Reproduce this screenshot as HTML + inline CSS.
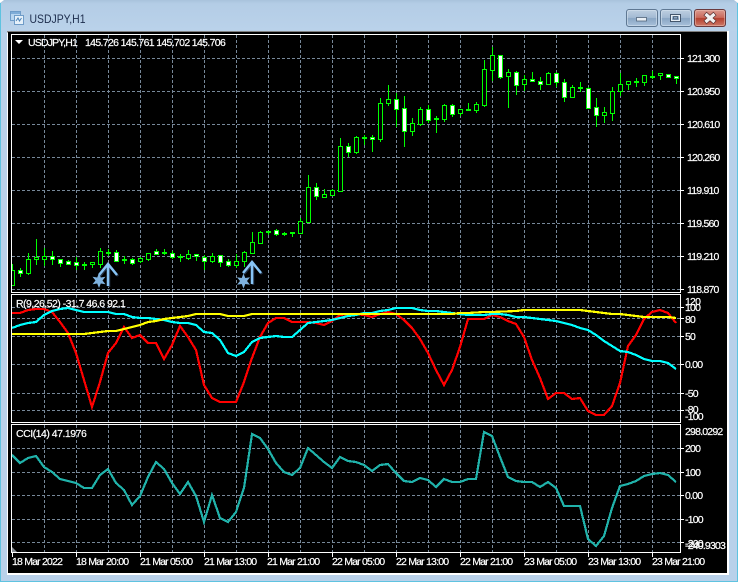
<!DOCTYPE html>
<html>
<head>
<meta charset="utf-8">
<title>USDJPY,H1</title>
<style>
html,body{margin:0;padding:0;background:#b9d1ea;width:738px;height:582px;overflow:hidden}
svg{display:block;position:absolute;left:0;top:0}
text{font-family:"Liberation Sans",sans-serif;font-size:10.500px;fill:#fff;stroke:#fff;stroke-width:.2px;letter-spacing:-.8px}
</style>
</head>
<body>
<svg width="738" height="582" viewBox="0 0 738 582" xmlns="http://www.w3.org/2000/svg">
<defs>
<linearGradient id="tb" x1="0" y1="0" x2="0" y2="1"><stop offset="0" stop-color="#a9c3dc"/><stop offset=".12" stop-color="#b4cde6"/><stop offset="1" stop-color="#bad2ea"/></linearGradient>
<linearGradient id="btn" x1="0" y1="0" x2="0" y2="1"><stop offset="0" stop-color="#bfd0e2"/><stop offset=".48" stop-color="#a3bad3"/><stop offset=".52" stop-color="#8aa6c4"/><stop offset="1" stop-color="#a9c2dc"/></linearGradient>
<linearGradient id="cls" x1="0" y1="0" x2="0" y2="1"><stop offset="0" stop-color="#dd9d92"/><stop offset=".48" stop-color="#c9685b"/><stop offset=".52" stop-color="#b4402f"/><stop offset="1" stop-color="#cf7d6c"/></linearGradient>
<clipPath id="p1"><rect x="12" y="35" width="668" height="257"/></clipPath>
<clipPath id="p2"><rect x="12" y="295" width="668" height="127"/></clipPath>
<clipPath id="p3"><rect x="12" y="425" width="668" height="127"/></clipPath>
</defs>

<!-- window frame -->
<rect width="738" height="582" fill="#b9d1ea"/>
<rect width="738" height="31" fill="url(#tb)"/>
<path d="M0 3V0h4zM738 3V0h-4z" fill="#fff"/>
<path d="M.5 3V581.5H737.5V3" fill="none" stroke="#5fc3e0" stroke-width="1"/>
<rect x="7" y="31" width="722" height="544" fill="#fff"/>
<rect x="7" y="31" width="720" height="1.5" fill="#7f7f7f"/>
<rect x="8" y="32" width="719" height="541" fill="#000"/>

<!-- title -->
<rect x="10.500" y="11.500" width="10" height="9" fill="#b9d6f0" stroke="#6f9cc8"/>
<rect x="14.500" y="15.500" width="9" height="9" fill="#e6f1fa" stroke="#6f9cc8"/>
<path d="M16 21l2-3 1.500 3 2-3" fill="none" stroke="#4d84b8"/>
<rect x="11" y="12" width="9" height="2" fill="#7fadd8"/>
<text x="29.500" y="23" style="font-size:12px;fill:#1c2c4c;stroke:none;letter-spacing:0" textLength="56" lengthAdjust="spacingAndGlyphs">USDJPY,H1</text>

<!-- buttons -->
<rect x="626.500" y="9.500" width="31" height="17" rx="2.500" fill="url(#btn)" stroke="#5f7893"/>
<rect x="627.500" y="10.500" width="29" height="15" rx="2" fill="none" stroke="#d5e2ee" stroke-opacity=".6"/>
<rect x="636.500" y="17.500" width="10" height="3.500" fill="#e9eff5" stroke="#50647a" stroke-width=".8"/>
<rect x="660.500" y="9.500" width="31" height="17" rx="2.500" fill="url(#btn)" stroke="#5f7893"/>
<rect x="661.500" y="10.500" width="29" height="15" rx="2" fill="none" stroke="#d5e2ee" stroke-opacity=".6"/>
<rect x="670.500" y="14.500" width="10" height="7" fill="none" stroke="#44566c" stroke-width="1"/>
<rect x="671.500" y="15.500" width="8" height="5" fill="none" stroke="#e9eff5" stroke-width="1"/>
<rect x="673.500" y="16.500" width="4" height="2.500" fill="#8aa6c4" stroke="#44566c" stroke-width=".8"/>
<rect x="694.500" y="9.500" width="31" height="17" rx="2.500" fill="url(#cls)" stroke="#6a3a3e"/>
<rect x="695.500" y="10.500" width="29" height="15" rx="2" fill="none" stroke="#eec3b8" stroke-opacity=".5"/>
<path d="M705 13.500l10 9M715 13.500l-10 9" stroke="#5a3030" stroke-width="4.600"/>
<path d="M705.500 14l9 8M714.500 14l-9 8" stroke="#f2f2f2" stroke-width="3.200"/>

<!-- grid -->
<g fill="none" stroke="#778899" stroke-width="1" stroke-dasharray="3 2" shape-rendering="crispEdges">
<path d="M44.500 35V552M76.500 35V552M108.500 35V552M140.500 35V552M172.500 35V552M204.500 35V552M236.500 35V552M268.500 35V552M300.500 35V552M332.500 35V552M364.500 35V552M396.500 35V552M428.500 35V552M460.500 35V552M492.500 35V552M524.500 35V552M556.500 35V552M588.500 35V552M620.500 35V552M652.500 35V552"/>
<path d="M12 58.500H680M12 91.500H680M12 124.500H680M12 157.500H680M12 190.500H680M12 223.500H680M12 256.500H680M12 289.500H680"/>
<path d="M12 307.500H680M12 318.500H680M12 336.500H680M12 364.500H680M12 393.500H680M12 410.500H680"/>
<path d="M12 448.500H680M12 472.500H680M12 495.500H680M12 519.500H680M12 542.500H680"/>
</g>

<!-- candles -->
<g clip-path="url(#p1)" shape-rendering="crispEdges" stroke="#00ff00" stroke-width="1">
<path fill="none" d="M12.500 264V285M20.500 268V277M28.500 253V275M36.500 239V265M44.500 248V266M52.500 251V265M60.500 259V267M68.500 260V265M76.500 257V270M84.500 262V270M92.500 262V268M100.500 248V268M108.500 249V256M116.500 250V262M124.500 256V264M132.500 258V265M140.500 257V263M148.500 253V261M156.500 249V255M164.500 249V255M172.500 251V259M180.500 254V262M188.500 250V260M196.500 254V261M204.500 255V270M212.500 253V263M220.500 255V267M228.500 259V267M236.500 254V268M244.500 251V267M252.500 232V253M260.500 231V243M268.500 231V235M276.500 229V236M284.500 232V236M292.500 232V237M300.500 218V233M308.500 175V223M316.500 183V200M324.500 189V197M332.500 189V195M340.500 138V191M348.500 143V157M356.500 136V154M364.500 135V145M372.500 135V152M380.500 98V142M388.500 85V106M396.500 93V127M404.500 96V147M412.500 118V136M420.500 107V126M428.500 105V123M436.500 116V133M444.500 104V122M452.500 104V117M460.500 109V116M468.500 103V111M476.500 102V113M484.500 60V107M492.500 47V81M500.500 55V79M508.500 69V108M516.500 71V95M524.500 75V91M532.500 72V82M540.500 77V90M548.500 72V85M556.500 72V87M564.500 79V102M572.500 85V98M580.500 82V92M588.500 87V109M596.500 98V127M604.500 107V123M612.500 87V121M620.500 73V96M628.500 81V90M636.500 78V87M644.500 75V86M652.500 71V79M660.500 73V80M668.500 74V78M676.500 76V84"/>
<path fill="#000" d="M10.500 270.500h4v15h-4zM26.500 259.500h4v14h-4zM34.500 257.500h4v2h-4zM42.500 256.500h4v3h-4zM90.500 262.500h4v2h-4zM98.500 251.500h4v13h-4zM138.500 258.500h4v3h-4zM146.500 253.500h4v6h-4zM186.500 254.500h4v4h-4zM210.500 256.500h4v5h-4zM234.500 261.500h4v4h-4zM242.500 252.500h4v9h-4zM250.500 242.500h4v11h-4zM258.500 232.500h4v11h-4zM298.500 221.500h4v12h-4zM306.500 187.500h4v35h-4zM322.500 194.500h4v3h-4zM330.500 190.500h4v5h-4zM338.500 146.500h4v45h-4zM354.500 137.500h4v15h-4zM378.500 103.500h4v36h-4zM386.500 99.500h4v4h-4zM410.500 123.500h4v8h-4zM418.500 109.500h4v15h-4zM442.500 105.500h4v14h-4zM458.500 109.500h4v4h-4zM474.500 104.500h4v6h-4zM482.500 69.500h4v36h-4zM490.500 55.500h4v15h-4zM506.500 72.500h4v4h-4zM522.500 79.500h4v5h-4zM546.500 73.500h4v11h-4zM570.500 87.500h4v10h-4zM602.500 112.500h4v3h-4zM610.500 91.500h4v22h-4zM618.500 84.500h4v7h-4zM626.500 81.500h4v3h-4zM642.500 75.500h4v7h-4zM658.500 73.500h4v2h-4z"/>
<path fill="#fff" d="M18.500 270.500h4v3h-4zM50.500 256.500h4v3h-4zM58.500 259.500h4v4h-4zM66.500 261.500h4v3h-4zM74.500 262.500h4v3h-4zM114.500 252.500h4v9h-4zM130.500 259.500h4v4h-4zM154.500 251.500h4v3h-4zM170.500 253.500h4v4h-4zM194.500 254.500h4v2h-4zM202.500 257.500h4v4h-4zM218.500 255.500h4v7h-4zM226.500 261.500h4v4h-4zM274.500 230.500h4v4h-4zM314.500 187.500h4v9h-4zM346.500 146.500h4v6h-4zM370.500 137.500h4v2h-4zM394.500 99.500h4v10h-4zM402.500 108.500h4v23h-4zM426.500 109.500h4v11h-4zM450.500 105.500h4v9h-4zM498.500 55.500h4v22h-4zM514.500 72.500h4v13h-4zM530.500 79.500h4v2h-4zM538.500 81.500h4v3h-4zM554.500 73.500h4v9h-4zM562.500 82.500h4v15h-4zM586.500 88.500h4v20h-4zM594.500 107.500h4v8h-4zM666.500 74.500h4v3h-4zM674.500 76.500h4v2h-4z"/>
<path fill="#00ff00" d="M82.500 264.500h4v1h-4zM106.500 252.500h4v1h-4zM122.500 259.500h4v1h-4zM162.500 252.500h4v1h-4zM178.500 256.500h4v1h-4zM266.500 231.500h4v1h-4zM282.500 233.500h4v1h-4zM290.500 232.500h4v1h-4zM362.500 137.500h4v1h-4zM434.500 118.500h4v1h-4zM466.500 109.500h4v1h-4zM578.500 87.500h4v1h-4zM634.500 81.500h4v1h-4zM650.500 76.500h4v1h-4z"/>
</g>

<!-- arrows + stars -->
<g fill="none">
<path d="M100 276L109 265L118 276M109 265V287" stroke="#25354a" stroke-width="2.500"/>
<path d="M99 275L108 264L117 275M108 264V286" stroke="#87c4f5" stroke-width="2.500"/>
<path d="M244 274L253 263L262 274M253 263V285" stroke="#25354a" stroke-width="2.500"/>
<path d="M243 273L252 262L261 273M252 262V284" stroke="#87c4f5" stroke-width="2.500"/>
</g>
<polygon transform="translate(99 280.500)" points="0,-7.500 1.800,-3 6.500,-3.750 3.500,0 6.500,3.750 1.800,3 0,7.500 -1.800,3 -6.500,3.750 -3.500,0 -6.500,-3.750 -1.800,-3" fill="#7fb2de"/>
<polygon transform="translate(243.500 281)" points="0,-7.500 1.800,-3 6.500,-3.750 3.500,0 6.500,3.750 1.800,3 0,7.500 -1.800,3 -6.500,3.750 -3.500,0 -6.500,-3.750 -1.800,-3" fill="#7fb2de"/>

<!-- RSI lines -->
<g clip-path="url(#p2)" fill="none" stroke-width="2.200" shape-rendering="crispEdges">
<polyline stroke="#ff0000" points="12,313 20,313 28,310 36,309 44,309 52,312 60,322 68,333 76,353 84,380 92,407 100,382 108,353 116,343 124,327 132,338 140,335 148,343 156,343 164,359 172,345 180,326 188,337 196,350 204,385 212,398 220,402 228,402 236,402 244,382 252,358 260,337 268,323 276,318 284,318 292,322 300,322 308,322 316,323 324,325 332,321 340,315 348,314 356,314 364,315 372,317 380,314 388,312 396,314 404,320 412,328 420,339 428,353 436,370 444,385 452,370 460,347 468,319 476,319 484,319 492,315 500,317 508,321 516,324 524,337 532,360 540,378 548,399 556,393 564,393 572,399 580,398 588,411 596,415 604,415 612,406 620,383 628,346 636,335 644,319 652,312 660,310 668,313 676,323"/>
<polyline stroke="#00ffff" points="12,328 20,325 28,323 36,322 44,315 52,311 60,309 68,308 76,310 84,312 92,312 100,312 108,312 116,314 124,314 132,317 140,318 148,318 156,319 164,320 172,322 180,323 188,323 196,325 204,332 212,333 220,340 228,353 236,356 244,352 252,342 260,338 268,337 276,336 284,337 292,337 300,330 308,323 316,322 324,321 332,320 340,318 348,316 356,315 364,313 372,313 380,311 388,310 396,308 404,308 412,308 420,310 428,311 436,311 444,312 452,313 460,314 468,315 476,315 484,315 492,314 500,314 508,315 516,317 524,317 532,318 540,319 548,320 556,321 564,323 572,325 580,328 588,330 596,335 604,341 612,346 620,351 628,352 636,355 644,359 652,361 660,361 668,363 676,369"/>
<polyline stroke="#ffff00" points="12,334 84,334 92,333 100,332 108,331 116,331 124,329 132,327 140,325 148,322 156,321 164,319 172,318 180,317 188,316 196,314 204,314 212,314 220,314 228,316 244,316 252,314 260,314 452,314 460,313 468,313 484,312 492,312 516,311 524,310 580,310 588,311 596,312 604,313 612,314 620,314 628,315 636,316 644,317 668,317 676,318"/>
</g>

<!-- CCI line -->
<polyline clip-path="url(#p3)" fill="none" stroke="#20b2aa" stroke-width="2.200" shape-rendering="crispEdges" points="12,455 20,463 28,458 36,456 44,467 52,472 60,479 68,481 76,483 84,488 92,488 100,475 108,469 116,483 124,490 132,505 140,496 148,477 156,462 164,469 172,483 180,494 188,482 196,496 204,522 212,495 220,518 228,522 236,512 244,488 252,434 260,438 268,449 276,463 284,472 292,475 300,468 308,448 316,455 324,462 332,468 340,457 348,461 356,462 364,465 372,471 380,465 388,464 396,473 404,481 412,482 420,478 428,480 436,487 444,479 452,482 460,482 468,479 476,479 484,432 492,436 500,457 508,477 516,481 524,482 532,482 540,487 548,482 556,488 564,506 572,506 580,506 588,539 596,546 604,536 612,508 620,486 628,484 636,481 644,476 652,474 660,473 668,475 676,482"/>

<!-- pane frames -->
<g fill="none" stroke="#fff" stroke-width="1" shape-rendering="crispEdges">
<rect x="11.500" y="34.500" width="669" height="258"/>
<rect x="11.500" y="294.500" width="669" height="128"/>
<rect x="11.500" y="424.500" width="669" height="128"/>
<path d="M681 58.500h3M681 91.500h3M681 124.500h3M681 157.500h3M681 190.500h3M681 223.500h3M681 256.500h3M681 289.500h3M681 307.500h3M681 318.500h3M681 336.500h3M681 364.500h3M681 393.500h3M681 410.500h3M681 448.500h3M681 472.500h3M681 495.500h3M681 519.500h3M681 542.500h3"/>
<path d="M12.500 553v4M76.500 553v4M140.500 553v4M204.500 553v4M268.500 553v4M332.500 553v4M396.500 553v4M460.500 553v4M524.500 553v4M588.500 553v4M652.500 553v4"/>
</g>
<polygon points="12,547 12,552 17,552" fill="#8a8f96"/>

<!-- legends -->
<polygon points="15,40 23,40 19,44" fill="#fff"/>
<text x="28" y="46" textLength="49">USDJPY,H1</text>
<text x="85" y="46" textLength="140">145.726 145.761 145.702 145.706</text>
<text x="16" y="307" textLength="109">R(9,26,52) -31.7 46.6 92.1</text>
<text x="16" y="437" textLength="70">CCI(14) 47.1976</text>

<!-- axis labels -->
<text x="687" y="62">121.300</text>
<text x="687" y="95">120.950</text>
<text x="687" y="128">120.610</text>
<text x="687" y="161">120.260</text>
<text x="687" y="194">119.910</text>
<text x="687" y="227">119.560</text>
<text x="687" y="260">119.210</text>
<text x="687" y="293">118.870</text>

<text x="685" y="305">120</text>
<text x="685" y="311">100</text>
<text x="685" y="323">80</text>
<text x="685" y="340">50</text>
<text x="685" y="368">0.00</text>
<text x="685" y="397">-50</text>
<text x="685" y="413">-80</text>
<text x="685" y="420">-100</text>

<text x="685" y="435">298.0292</text>
<text x="685" y="452">200</text>
<text x="685" y="476">100</text>
<text x="685" y="499">0.00</text>
<text x="685" y="523">-100</text>
<text x="685" y="547">-200</text>
<text x="685" y="549">-240.9303</text>

<text x="12" y="565">18 Mar 2022</text>
<text x="76" y="565">18 Mar 20:00</text>
<text x="140" y="565">21 Mar 05:00</text>
<text x="204" y="565">21 Mar 13:00</text>
<text x="267" y="565">21 Mar 21:00</text>
<text x="332" y="565">22 Mar 05:00</text>
<text x="396" y="565">22 Mar 13:00</text>
<text x="460" y="565">22 Mar 21:00</text>
<text x="524" y="565">23 Mar 05:00</text>
<text x="588" y="565">23 Mar 13:00</text>
<text x="652" y="565">23 Mar 21:00</text>
</svg>
</body>
</html>
